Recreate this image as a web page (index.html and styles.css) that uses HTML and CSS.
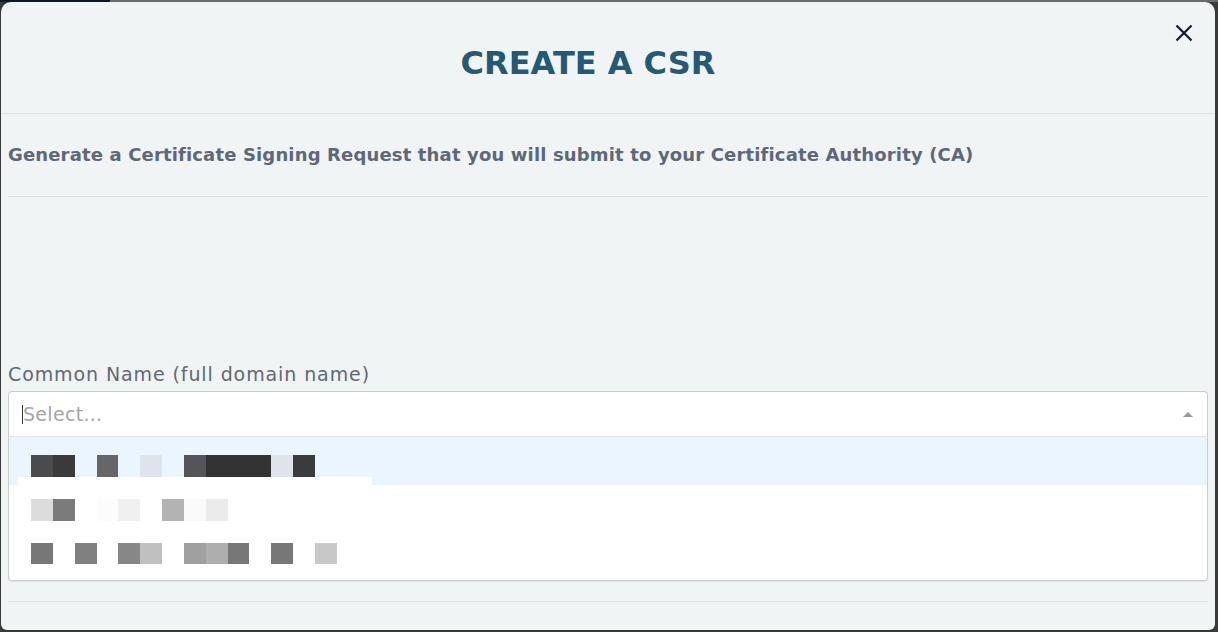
FILE: index.html
```html
<!DOCTYPE html>
<html lang="en">
<head>
    <meta charset="UTF-8">
    <meta name="viewport" content="width=device-width, initial-scale=1.0">
    <title>Create a CSR</title>
    <link rel="stylesheet" href="styles.css">
</head>
<body>
    <!-- Página por trás do modal -->
    <div class="backdrop-strip">
        <div class="strip-dark"></div>
        <div class="strip-grey"></div>
    </div>

    <div class="modal">
        <div class="modal-header">
            <h1 class="modal-title">CREATE A CSR</h1>
            <button class="close-btn" aria-label="Close">
                <svg width="18" height="18" viewBox="0 0 18 18">
                    <path d="M1.5 1.5 L16.5 16.5 M16.5 1.5 L1.5 16.5" stroke="#0f1c2d" stroke-width="2.2" fill="none"/>
                </svg>
            </button>
        </div>

        <div class="modal-body">
            <p class="intro">Generate a Certificate Signing Request that you will submit to your Certificate Authority (CA)</p>

            <div class="field">
                <label class="field-label">Common Name (full domain name)</label>
                <div class="select-control">
                    <span class="cursor"></span>
                    <span class="placeholder">Select...</span>
                    <span class="arrow-up"></span>
                </div>
                <div class="select-menu">
                    <div class="option option-focused">
                        <div class="blur-row">
                            <span style="background:#4b4b4e"></span><span style="background:#3a3a3a"></span><span></span><span style="background:#666669"></span><span></span><span style="background:#dfe4ec"></span><span></span><span style="background:#555557"></span><span style="background:#333"></span><span style="background:#333"></span><span style="background:#333"></span><span style="background:#dfe4ec"></span><span style="background:#3a3b3b"></span>
                        </div>
                        <div class="blur-bar"></div>
                    </div>
                    <div class="option">
                        <div class="blur-row">
                            <span style="background:#dcdcdc"></span><span style="background:#7b7b7b"></span><span></span><span style="background:#fcfcfc"></span><span style="background:#f0f0f0"></span><span></span><span style="background:#b3b3b3"></span><span style="background:#fafafa"></span><span style="background:#ebebeb"></span>
                        </div>
                    </div>
                    <div class="option">
                        <div class="blur-row short">
                            <span style="background:#777"></span><span></span><span style="background:#808080"></span><span></span><span style="background:#878787"></span><span style="background:#c0c0c0"></span><span></span><span style="background:#a0a0a0"></span><span style="background:#aeaeae"></span><span style="background:#777"></span><span></span><span style="background:#777"></span><span></span><span style="background:#c8c8c8"></span>
                        </div>
                    </div>
                </div>
            </div>

            <div class="modal-footer"></div>
        </div>
    </div>
</body>
</html>
```

FILE: styles.css
```css
/* Estilos globais */
body {
    font-family: "DejaVu Sans", "Open Sans", sans-serif;
    margin: 0;
    padding: 0;
    height: 632px;
    overflow: hidden;
    background-color: #3a3a3a;
}

.backdrop-strip {
    display: flex;
    height: 2px;
}

.strip-dark {
    width: 110px;
    background-color: #0d1822;
}

.strip-grey {
    flex: 1;
    background-color: #6b6b6b;
}

/* Modal */
.modal {
    position: relative;
    height: 628px;
    margin: 0 3px 0 1px;
    background-color: #f0f4f5;
    border-radius: 10px 10px 6px 6px;
    overflow: hidden;
}

.modal-header {
    height: 111px;
    border-bottom: 1px solid #dde1e3;
    display: flex;
    justify-content: center;
    align-items: center;
}

.modal-title {
    margin: 10px 40px 0 0;
    font-size: 32px;
    font-weight: 600;
    color: #245a74;
}

.close-btn {
    position: absolute;
    top: 22px;
    right: 22px;
    padding: 0;
    border: none;
    background: none;
    cursor: pointer;
}

.modal-body {
    padding: 0 7px;
}

.intro {
    margin: 0;
    height: 82px;
    line-height: 82px;
    border-bottom: 1px solid #dde1e3;
    font-size: 18px;
    font-weight: 700;
    letter-spacing: 0.15px;
    color: #5e6878;
}

/* Campo de seleção */
.field {
    padding-top: 165px;
}

.field-label {
    display: block;
    font-size: 19px;
    line-height: 24px;
    letter-spacing: 0.9px;
    margin-bottom: 5px;
    color: #5f6877;
}

.select-control {
    display: flex;
    align-items: center;
    height: 44px;
    padding: 0 14px 0 13px;
    background-color: #fff;
    border: 1px solid #ccc;
    border-bottom-color: #e6e6e6;
    border-radius: 4px 4px 0 0;
}

.cursor {
    width: 1px;
    height: 19px;
    background-color: #333;
}

.placeholder {
    flex: 1;
    font-size: 19px;
    letter-spacing: 0.3px;
    color: #a6a6a6;
}

.arrow-up {
    width: 0;
    height: 0;
    border-left: 5px solid transparent;
    border-right: 5px solid transparent;
    border-bottom: 5px solid #999;
}

.select-menu {
    background-color: #fff;
    border: 1px solid #ccc;
    border-top: none;
    border-radius: 0 0 4px 4px;
    box-shadow: 0 1px 1px rgba(0, 0, 0, 0.08);
    padding-bottom: 8px;
}

.option {
    padding: 14px 22px 8px;
}

.option-focused {
    background-color: #ebf5ff;
    padding: 18px 22px 0;
}

.blur-row {
    display: flex;
    height: 22px;
}

.blur-row.short {
    height: 21px;
}

.blur-row span {
    width: 21.85px;
    flex-shrink: 0;
}

.blur-bar {
    height: 8px;
    width: 354px;
    margin-left: -13px;
    background-color: #fff;
}

.modal-footer {
    margin-top: 20px;
    border-top: 1px solid #dde1e3;
}
```
